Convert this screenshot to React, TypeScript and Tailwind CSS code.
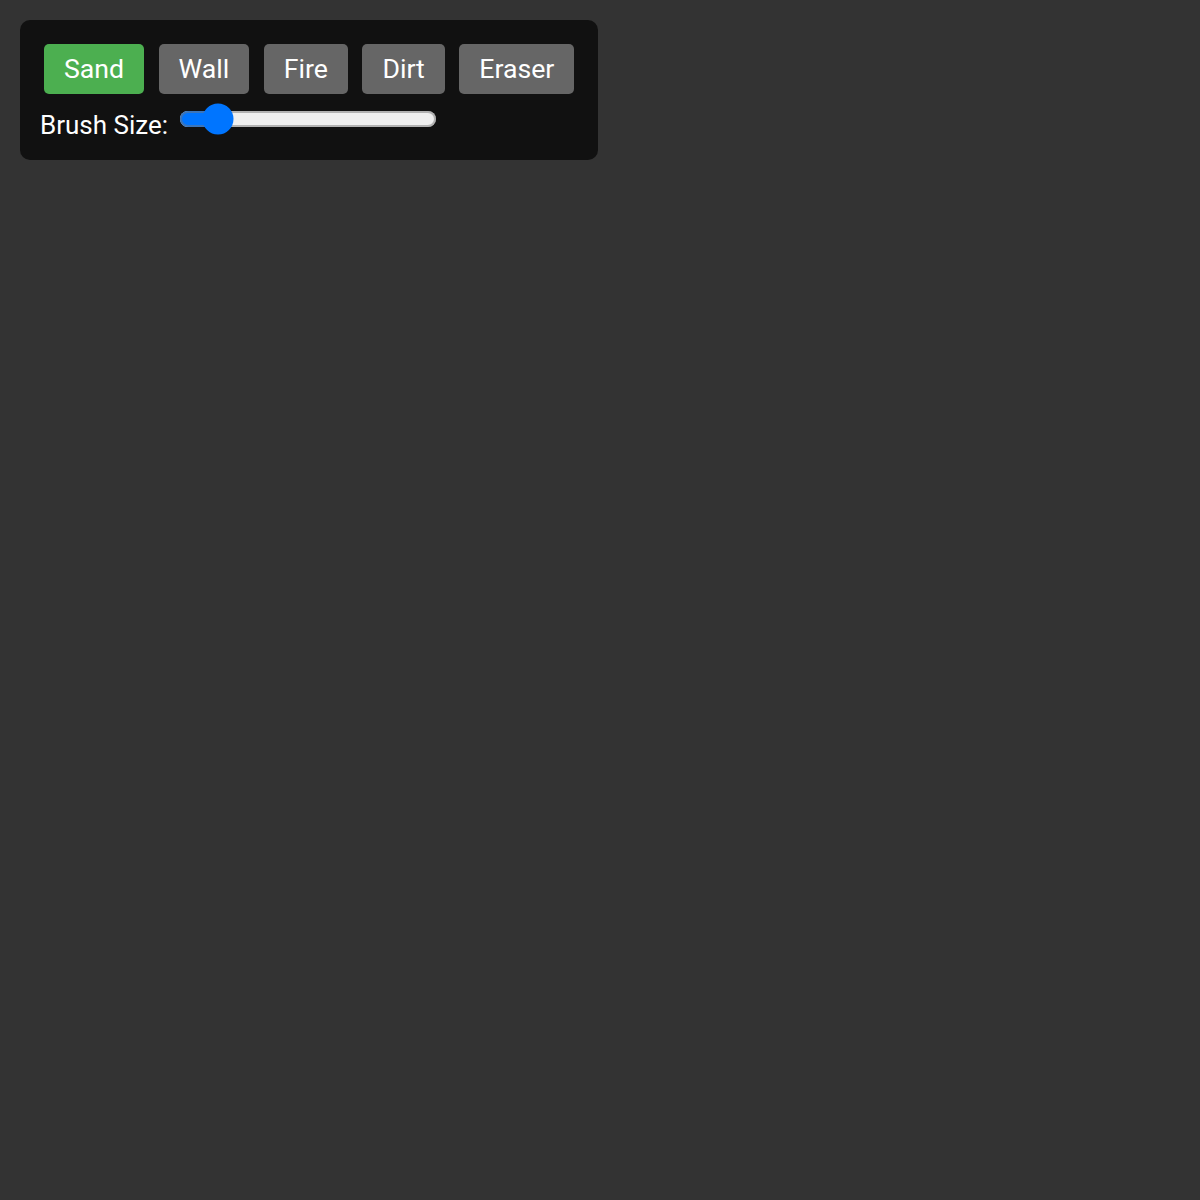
import { useState } from "react";

const tools = ["Sand", "Wall", "Fire", "Dirt", "Eraser"];

export default function App() {
  const [active, setActive] = useState("Sand");
  const [brush, setBrush] = useState(5);

  return (
    <div className="min-h-[1200px] w-full bg-[#333333] p-[20px] font-['Roboto',sans-serif] text-white">
      <div className="inline-flex flex-col gap-[5px] rounded-[10px] bg-[#111111] px-[20px] pt-[24px] pb-[22px]">
        <div className="flex gap-[14.5px] px-[4px]">
          {tools.map((t) => (
            <button
              key={t}
              onClick={() => setActive(t)}
              className={`h-[50px] rounded-[5px] px-[20px] text-[26.67px] leading-none text-white ${
                active === t ? "bg-[#4caf50]" : "bg-[#666666]"
              }`}
            >
              {t}
            </button>
          ))}
        </div>
        <div className="flex items-center gap-[11px]">
          <span className="mt-[13px] text-[26px] leading-none">Brush Size:</span>
          <input
            type="range"
            min={1}
            max={40}
            value={brush}
            onChange={(e) => setBrush(Number(e.target.value))}
            className="[zoom:2] w-[129px] accent-[#0075ff]"
          />
        </div>
      </div>
    </div>
  );
}
